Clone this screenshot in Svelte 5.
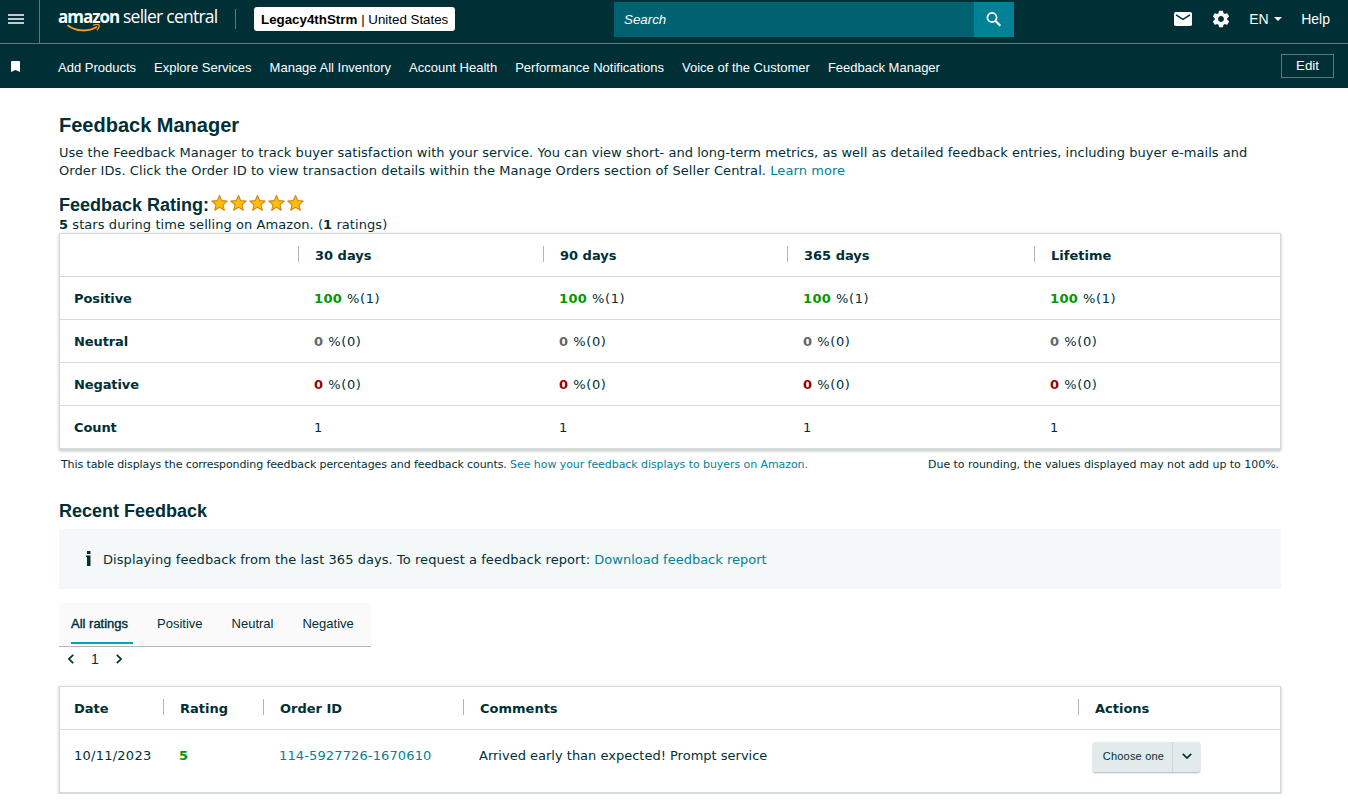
<script>
  const navLinks = [
    'Add Products',
    'Explore Services',
    'Manage All Inventory',
    'Account Health',
    'Performance Notifications',
    'Voice of the Customer',
    'Feedback Manager'
  ];

  const periods = ['30 days', '90 days', '365 days', 'Lifetime'];

  const ratings = [
    { label: 'Positive', tone: 'good', percent: 100, count: 1 },
    { label: 'Neutral', tone: 'neutral', percent: 0, count: 0 },
    { label: 'Negative', tone: 'bad', percent: 0, count: 0 }
  ];

  const tabs = ['All ratings', 'Positive', 'Neutral', 'Negative'];
  let activeTab = 'All ratings';

  const feedback = [
    {
      date: '10/11/2023',
      rating: 5,
      orderId: '114-5927726-1670610',
      comment: 'Arrived early than expected! Prompt service'
    }
  ];
</script>

<header>
  <div class="top-bar">
    <button class="menu" aria-label="Menu">
      <svg width="16" height="12" viewBox="0 0 16 12"><path d="M0 1h16M0 5h16M0 9h16" stroke="#fff" stroke-width="1.6" /></svg>
    </button>
    <a href="/" class="logo">
      <span class="logo-text"><b>amazon</b><span class="sub">seller central</span></span>
      <svg class="smile" width="34" height="9" viewBox="0 0 34 9" fill="none" stroke="#f79a2e">
        <path d="M.5 1.2C9 7.600 21 8.300 30 2.800" stroke-width="1.8" />
        <path d="M26 1.200C29 .4 31.500.3 32 1.100S31.500 4.500 30 6.200" stroke-width="1.300" />
      </svg>
    </a>
    <span class="divider"></span>
    <div class="account"><b>Legacy4thStrm</b><i>|</i>United States</div>
    <div class="search">
      <span>Search</span>
      <button aria-label="Search">
        <svg width="16" height="16" viewBox="0 0 16 16" fill="none" stroke="#fff"><circle cx="6" cy="5.500" r="4.600" stroke-width="1.700" /><path d="M9.300 8.800l5 5" stroke-width="2.200" /></svg>
      </button>
    </div>
    <div class="tools">
      <svg width="18" height="14" viewBox="0 0 18 14"><rect width="18" height="14" rx="1.800" fill="#fff" /><path d="M2 2.800l7 4.500 7-4.500" fill="none" stroke="#002f36" stroke-width="1.500" /></svg>
      <svg class="gear" width="20" height="20" viewBox="0 0 24 24"><path fill="#fff" d="M19.430 12.980c.04-.32.07-.64.07-.98s-.03-.66-.07-.98l2.110-1.650c.19-.15.24-.42.12-.64l-2-3.460c-.12-.22-.39-.3-.61-.22l-2.490 1c-.52-.4-1.080-.73-1.690-.98l-.38-2.650C14.460 2.180 14.250 2 14 2h-4c-.25 0-.46.18-.49.42l-.38 2.650c-.61.25-1.170.59-1.690.98l-2.490-1c-.23-.09-.49 0-.61.22l-2 3.460c-.13.22-.07.49.12.64l2.110 1.650c-.04.32-.07.65-.07.98s.03.66.07.98l-2.110 1.650c-.19.15-.24.42-.12.64l2 3.460c.12.22.39.3.61.22l2.490-1c.52.4 1.080.73 1.690.98l.38 2.650c.03.24.24.42.49.42h4c.25 0 .46-.18.49-.42l.38-2.650c.61-.25 1.170-.59 1.690-.98l2.490 1c.23.09.49 0 .61-.22l2-3.460c.12-.22.07-.49-.12-.64l-2.110-1.650zM12 15.500c-1.930 0-3.500-1.570-3.500-3.500s1.570-3.500 3.500-3.500 3.500 1.570 3.500 3.500-1.570 3.500-3.500 3.500z" /></svg>
      <span class="lang">EN <svg width="8" height="4" viewBox="0 0 8 4"><path d="M0 0h8L4 4z" fill="#fff" /></svg></span>
      <span class="help">Help</span>
    </div>
  </div>
  <nav>
    <svg class="bookmark" width="9" height="11" viewBox="0 0 9 11"><path d="M0 1q0-1 1-1h7q1 0 1 1v10L4.500 9 0 11z" fill="#fff" /></svg>
    {#each navLinks as link}
      <a href="/">{link}</a>
    {/each}
    <button class="edit">Edit</button>
  </nav>
</header>

<main>
  <h1>Feedback Manager</h1>
  <p class="intro">
    <span class="line first">Use the Feedback Manager to track buyer satisfaction with your service. You can view short- and long-term metrics, as well as detailed feedback entries, including buyer e-mails and</span>
    <span class="line second">Order IDs. Click the Order ID to view transaction details within the Manage Orders section of Seller Central. <a href="/">Learn more</a></span>
  </p>

  <div class="rating-title">
    <h2>Feedback Rating:</h2>
    {#each Array(5) as _}
      <svg class="star" width="19" height="18" viewBox="0 0 19 18"><path d="M9.500 1.500l2.200 5.100 5.500.5-4.200 3.700 1.300 5.400-4.800-2.900-4.800 2.900L6 10.800 1.800 7.100l5.500-.5z" fill="#ffbe0b" stroke="#ce8615" stroke-width="1.100" stroke-linejoin="round" /></svg>
    {/each}
  </div>
  <p class="summary"><b>5</b> stars during time selling on Amazon. (<b>1</b> ratings)</p>

  <div class="table metrics">
    <div class="row head">
      <div></div>
      {#each periods as period}
        <div>{period}</div>
      {/each}
    </div>
    {#each ratings as row}
      <div class="row">
        <div class="label">{row.label}</div>
        {#each periods as _}
          <div class="value"><b class={row.tone}>{row.percent}</b> %({row.count})</div>
        {/each}
      </div>
    {/each}
    <div class="row">
      <div class="label">Count</div>
      {#each periods as _}
        <div>1</div>
      {/each}
    </div>
  </div>
  <div class="notes">
    <span class="left">This table displays the corresponding feedback percentages and feedback counts. <a href="/">See how your feedback displays to buyers on Amazon.</a></span>
    <span class="right">Due to rounding, the values displayed may not add up to 100%.</span>
  </div>

  <h2 class="recent">Recent Feedback</h2>
  <div class="info">
    <svg width="5" height="15" viewBox="0 0 5 15" fill="#002f36"><rect x="1" width="3.500" height="3" /><path d="M0 4.500h4.500V15H1V6H0z" /></svg>
    <span>Displaying feedback from the last 365 days. To request a feedback report: <a href="/">Download feedback report</a></span>
  </div>

  <div class="tabs">
    {#each tabs as tab}
      <button class:active={tab === activeTab} on:click={() => (activeTab = tab)}>{tab}</button>
    {/each}
  </div>
  <div class="pager">
    <svg width="6" height="10" viewBox="0 0 6 10"><path d="M5.200.8L1 5l4.200 4.200" /></svg>
    <span>1</span>
    <svg width="6" height="10" viewBox="0 0 6 10"><path d="M.8.8L5 5 .8 9.200" /></svg>
  </div>

  <div class="table entries">
    <div class="row head">
      <div>Date</div>
      <div>Rating</div>
      <div>Order ID</div>
      <div>Comments</div>
      <div>Actions</div>
    </div>
    {#each feedback as entry}
      <div class="row">
        <div class="date">{entry.date}</div>
        <div><b class="good">{entry.rating}</b></div>
        <div class="order"><a href="/">{entry.orderId}</a></div>
        <div>{entry.comment}</div>
        <div>
          <button class="choose">
            <span class="choose-text">Choose one</span>
            <span class="arrow"><svg width="10" height="6" viewBox="0 0 10 6"><path d="M.8.8L5 5 9.200.8" /></svg></span>
          </button>
        </div>
      </div>
    {/each}
  </div>
</main>

<style>
  :global(body) {
    background: #fff;
    overflow: hidden;
  }

  header,
  header button,
  h1,
  h2,
  .tabs button,
  .pager,
  .choose {
    font-family: 'Liberation Sans', Arial, sans-serif;
  }

  button {
    border: 0;
    padding: 0;
    background: none;
    color: inherit;
  }

  a {
    color: #008296;
    text-decoration: none;
  }

  header {
    height: 88px;
    background: #002f36;
    color: #fff;
  }

  .top-bar {
    display: flex;
    height: 43px;
    border-bottom: 1px solid #63747a;
  }

  .menu {
    width: 40px;
    box-sizing: border-box;
    padding: 14px 0 0 8px;
    border-right: 1px solid #63747a;
    display: flex;
    align-items: flex-start;
  }

  .logo {
    position: relative;
    width: 177px;
    margin-left: 18px;
    color: #fff;
  }

  .logo-text {
    display: flex;
    margin-top: 4px;
    font: 17.5px/26px 'Open Sans', sans-serif;
    white-space: nowrap;
  }

  .logo-text b {
    width: 65px;
    font-size: 17px;
    letter-spacing: -1px;
  }

  .sub {
    letter-spacing: -0.75px;
    margin-top: -1px;
  }

  .smile {
    position: absolute;
    left: 9px;
    top: 24px;
  }

  .divider {
    width: 1px;
    height: 20px;
    margin-top: 9px;
    background: #63747a;
  }

  .account {
    box-sizing: border-box;
    width: 201px;
    height: 24px;
    margin: 7px 0 0 18px;
    padding-left: 7px;
    border-radius: 3px;
    background: #fff;
    color: #000;
    font-size: 13.33px;
    line-height: 25px;
    white-space: nowrap;
  }

  .account i {
    margin: 0 3.5px 0 4px;
    font-style: normal;
  }

  .search {
    display: flex;
    width: 400px;
    height: 35px;
    margin: 2px 0 0 159px;
    background: #006170;
    font-size: 13.33px;
    line-height: 35px;
    font-style: italic;
  }

  .search span {
    flex: 1;
    padding-left: 10px;
  }

  .search button {
    width: 40px;
    background: #008296;
    display: flex;
    align-items: center;
    justify-content: center;
  }

  .tools {
    flex: 1;
    display: flex;
    align-items: center;
    justify-content: flex-end;
    height: 38px;
    padding-right: 18px;
    font-size: 14px;
  }

  .gear {
    margin: 0 18px 0 19px;
  }

  .lang {
    width: 33px;
    margin-right: 19px;
    white-space: nowrap;
  }

  .lang svg {
    margin: 0 0 3px 1px;
  }

  nav {
    display: flex;
    align-items: center;
    gap: 18px;
    height: 44px;
    padding: 0 14px 0 11px;
    font-size: 13px;
  }

  nav a {
    color: #fff;
    padding-top: 3px;
    white-space: nowrap;
  }

  .bookmark {
    margin-right: 20px;
  }

  .edit {
    width: 53px;
    height: 24px;
    margin-left: auto;
    padding-bottom: 2px;
    border: 1px solid #63747a;
    font-size: 13.33px;
  }

  main {
    width: 1222px;
    margin-left: 59px;
    color: #002f36;
    font: 13px/18px Verdana, 'DejaVu Sans', sans-serif;
  }

  h1 {
    margin: 0;
    padding-top: 25px;
    font-size: 20px;
    line-height: 24px;
  }

  h2 {
    margin: 0;
    font-size: 18px;
    line-height: 22px;
  }

  p {
    margin: 0;
  }

  .intro {
    padding-top: 7px;
  }

  .line {
    display: block;
    white-space: nowrap;
  }

  .first {
    letter-spacing: 0.034px;
  }

  .second {
    letter-spacing: 0.078px;
  }

  .rating-title {
    display: flex;
    height: 22px;
    margin-top: 13px;
  }

  .rating-title h2 {
    width: 151px;
    padding-top: 1px;
  }

  .star {
    margin-top: 1px;
  }

  .summary {
    margin-top: 1px;
    height: 17px;
    letter-spacing: 0.07px;
  }

  .table {
    box-sizing: border-box;
    border: 1px solid #d5dbdb;
    border-bottom-width: 2px;
    box-shadow: 0 1px 3px rgba(0, 0, 0, 0.25);
  }

  .metrics {
    height: 217px;
  }

  .row {
    display: grid;
    height: 42px;
    border-bottom: 1px solid #d5dbdb;
    align-items: center;
  }

  .row:last-child {
    border-bottom: 0;
  }

  .row > div {
    padding-left: 15px;
  }

  .row > div:first-child {
    padding-left: 14px;
  }

  .metrics .row {
    grid-template-columns: 239px 245px 244px 247px 1fr;
  }

  .metrics .row:not(.head) > div {
    padding-top: 2px;
  }

  .value {
    letter-spacing: 0.65px;
  }

  .value b {
    letter-spacing: 0.35px;
  }

  .label,
  .head {
    font-weight: bold;
  }

  .label {
    letter-spacing: -0.1px;
  }

  .head > div {
    height: 16px;
    line-height: 20px;
    border-right: 1px solid #aab7b8;
    margin-top: -2px;
  }

  .head > div + div {
    padding-left: 16px;
  }

  .head > div:last-child {
    border-right: 0;
  }

  .good {
    color: #009900;
  }

  .neutral {
    color: #666;
  }

  .bad {
    color: #900;
  }

  .notes {
    display: flex;
    justify-content: space-between;
    padding: 6px 2px 0;
    font-size: 11px;
  }

  .left {
    letter-spacing: -0.1px;
  }

  .left a {
    letter-spacing: -0.07px;
  }

  .right {
    letter-spacing: -0.04px;
  }

  .recent {
    margin-top: 26px;
  }

  .info {
    display: flex;
    align-items: center;
    gap: 12px;
    height: 60px;
    margin-top: 7px;
    padding-left: 27px;
    background: #f4f8f9;
    letter-spacing: 0.06px;
  }

  .info svg {
    margin-bottom: 2px;
  }

  .info span {
    padding-top: 2px;
  }

  .info a {
    letter-spacing: 0;
  }

  .tabs {
    display: flex;
    box-sizing: border-box;
    width: 312px;
    height: 44px;
    margin-top: 14px;
    padding-left: 12px;
    border-bottom: 1px solid #b3b7b8;
    background: #fafafa;
  }

  .tabs button {
    flex: none;
    height: 41px;
    box-sizing: border-box;
    margin-right: 29px;
    font-size: 13px;
    white-space: nowrap;
  }

  .tabs .active {
    width: 62px;
    margin-right: 24px;
    border-bottom: 2px solid #00a4b4;
    padding-top: 2px;
    text-align: left;
    -webkit-text-stroke: 0.4px #002f36;
  }

  .pager {
    display: flex;
    align-items: center;
    gap: 17px;
    height: 22px;
    padding: 1px 0 0 9px;
    font-size: 14px;
  }

  .pager path,
  .arrow path {
    fill: none;
    stroke: #002f36;
    stroke-width: 1.7;
  }

  .entries {
    height: 108px;
    margin-top: 16px;
  }

  .entries .row {
    grid-template-columns: 104px 100px 200px 615px 1fr;
  }

  .entries .row:last-child {
    height: 52px;
  }

  .date {
    letter-spacing: 0.25px;
  }

  .order {
    letter-spacing: 0.13px;
  }

  .choose {
    display: flex;
    width: 107px;
    height: 30px;
    margin: 2px 0 0 -1px;
    border-radius: 2px;
    background: #e3eaeb;
    box-shadow: 0 1px 2px rgba(0, 0, 0, 0.3);
    font-size: 11px;
    line-height: 29px;
    letter-spacing: 0.2px;
  }

  .choose-text {
    width: 77px;
    padding-left: 2px;
    border-right: 1px solid #cdd6d8;
  }

  .arrow {
    flex: 1;
    display: flex;
    align-items: center;
    justify-content: center;
  }

  .arrow svg {
    margin-bottom: 2px;
  }
</style>
